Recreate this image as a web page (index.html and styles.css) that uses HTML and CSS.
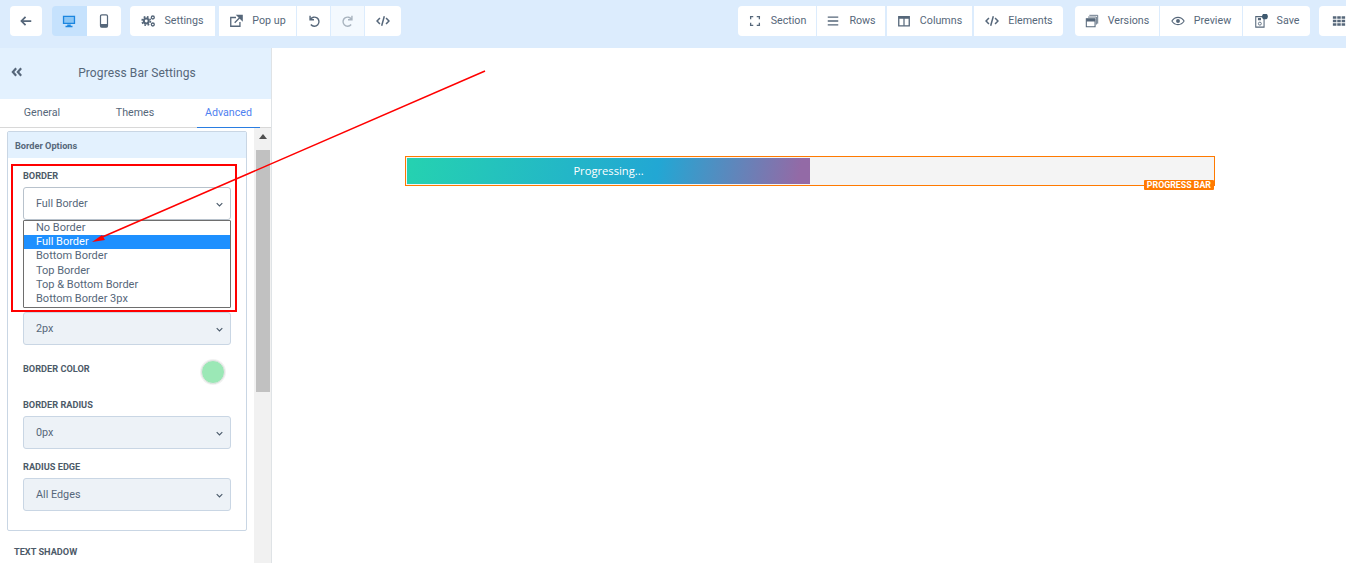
FILE: index.html
```html
<!DOCTYPE html>
<html lang="en">
<head>
  <meta charset="UTF-8">
  <title>Progress Bar Settings</title>
  <link rel="stylesheet" href="styles.css">
</head>
<body>
  <div class="app">
    <header class="topbar">
      <div class="group w-back">
        <a class="btn"><svg class="ico" viewBox="0 0 16 16"><path d="M14 8H3M7.500 3.200 2.800 8l4.700 4.800" fill="none" stroke="#56677a" stroke-width="2"/></svg></a>
      </div>
      <div class="group w-device">
        <a class="btn on"><svg class="ico" viewBox="0 0 16 16"><path d="M1 2h14v9.500H1z" fill="#1c86e0"/><path d="M2.500 3.500h11v6.500h-11z" fill="#8cc6f5"/><path d="M6 12h4v1.500h2V15H4v-1.500h2z" fill="#1c86e0"/></svg></a>
        <a class="btn"><svg class="ico" viewBox="0 0 16 16"><rect x="4" y="1" width="8" height="14" rx="1.500" fill="none" stroke="#56677a" stroke-width="1.400"/><path d="M4 11.500h8V15H4z" fill="#56677a"/></svg></a>
      </div>
      <div class="group w-left">
        <a class="btn settings"><svg class="ico wide" viewBox="0 0 16 16"><circle cx="6" cy="8" r="2.800" fill="none" stroke="#56677a" stroke-width="2.400"/><circle cx="6" cy="8" r="4.800" fill="none" stroke="#56677a" stroke-width="1.800" stroke-dasharray="2 1.800"/><circle cx="13.500" cy="4" r="1.700" fill="none" stroke="#56677a" stroke-width="1.500"/><circle cx="13.500" cy="12" r="1.700" fill="none" stroke="#56677a" stroke-width="1.500"/></svg>Settings</a>
        <a class="btn popup"><svg class="ico wide" viewBox="0 0 16 16"><path d="M12.500 9v5H2V4h6" fill="none" stroke="#56677a" stroke-width="1.500"/><path d="M6.500 10 13 3.500M9.500 1.500h5.500V7z" fill="#56677a" stroke="#56677a" stroke-width="1.500"/></svg>Pop up</a>
        <a class="btn undo"><svg class="ico" viewBox="0 0 16 16"><path d="M3.500 2v4.500H8M3.800 6.500a5.200 5.200 0 1 1 .6 5.500" fill="none" stroke="#56677a" stroke-width="1.600"/></svg></a>
        <a class="btn undo dim"><svg class="ico" viewBox="0 0 16 16"><path d="M12.500 2v4.500H8M12.200 6.500a5.200 5.200 0 1 0-.6 5.500" fill="none" stroke="#a9b4bf" stroke-width="1.600"/></svg></a>
        <a class="btn code"><svg class="ico" viewBox="0 0 16 16"><path d="M4.500 4.500 1.200 8l3.300 3.500M11.500 4.500 14.800 8l-3.300 3.500M9.500 2.500l-3 11" fill="none" stroke="#56677a" stroke-width="1.700"/></svg></a>
      </div>
      <div class="group w-section push">
        <a class="btn section"><svg class="ico wide" viewBox="0 0 16 16"><path d="M3 6V3h3M10 3h3v3M13 10v3h-3M6 13H3v-3" fill="none" stroke="#56677a" stroke-width="1.500"/></svg>Section</a>
        <a class="btn rows"><svg class="ico wide" viewBox="0 0 16 16"><path d="M2 3.500h12M2 8h12M2 12.500h12" stroke="#56677a" stroke-width="1.500"/></svg>Rows</a>
        <a class="btn columns"><svg class="ico wide" viewBox="0 0 16 16"><path d="M2 3h12v10.500H2z" fill="none" stroke="#56677a" stroke-width="1.500"/><path d="M2 3h12v2.500H2zM7.300 3h1.400v10.500H7.300z" fill="#56677a"/></svg>Columns</a>
        <a class="btn elements"><svg class="ico wide" viewBox="0 0 16 16"><path d="M4.500 4.500 1.200 8l3.300 3.500M11.500 4.500 14.800 8l-3.300 3.500M9.500 2.500l-3 11" fill="none" stroke="#56677a" stroke-width="1.700"/></svg>Elements</a>
      </div>
      <div class="group w-save">
        <a class="btn versions"><svg class="ico wide" viewBox="0 0 16 16"><path d="M5 1.500h9.500V11" fill="none" stroke="#56677a" stroke-width="1"/><path d="M3.500 3.500H13V12" fill="none" stroke="#56677a" stroke-width="1"/><path d="M1.500 5.500h10v9h-10z" fill="none" stroke="#56677a" stroke-width="1.200"/><path d="M1.500 5.500h10v3h-10z" fill="#56677a"/></svg>Versions</a>
        <a class="btn preview"><svg class="ico wide" viewBox="0 0 16 16"><path d="M1 8c3.500-5.500 10.500-5.500 14 0-3.500 5.500-10.500 5.500-14 0z" fill="none" stroke="#56677a" stroke-width="1.200"/><circle cx="8" cy="8" r="2.200" fill="#56677a"/></svg>Preview</a>
        <a class="btn save"><svg class="ico wide" viewBox="0 0 16 16"><path d="M2 3h9.500v12H2z" fill="none" stroke="#56677a" stroke-width="1.200"/><path d="M4.500 4.500h3.500v2.500H4.500z" fill="#56677a"/><circle cx="6.700" cy="11" r="1.700" fill="none" stroke="#56677a"/><circle cx="12.500" cy="2.800" r="3.300" fill="#3f5a70"/></svg>Save</a>
      </div>
      <div class="group w-grid">
        <a class="btn"><svg class="ico" viewBox="0 0 16 16"><path d="M1 2.500h4v3H1zM6 2.500h4v3H6zM11 2.500h4v3h-4zM1 6.500h4v3H1zM6 6.500h4v3H6zM11 6.500h4v3h-4zM1 10.500h4v3H1zM6 10.500h4v3H6zM11 10.500h4v3h-4z" fill="#56677a"/></svg></a>
      </div>
    </header>

    <div class="main">
      <aside class="side">
        <div class="side-head">
          <svg class="collapse" viewBox="0 0 14 12"><path d="M6 1.500 2 6l4 4.500M12 1.500 8 6l4 4.500" fill="none" stroke="#56677a" stroke-width="2.600"/></svg>
          <h1>Progress Bar Settings</h1>
        </div>
        <ul class="tabs">
          <li>General</li>
          <li>Themes</li>
          <li class="on">Advanced</li>
        </ul>
        <div class="side-body">
          <div class="side-scroll">
            <section class="card">
              <h2>Border Options</h2>
              <div class="card-body">
                <label class="first">BORDER</label>
                <div class="field white">
                  Full Border
                  <svg class="chev" viewBox="0 0 10 6"><path d="M1 1l4 4 4-4" fill="none" stroke="#4a5a6a" stroke-width="1.600"/></svg>
                  <ul class="options">
                    <li>No Border</li>
                    <li class="on">Full Border</li>
                    <li>Bottom Border</li>
                    <li>Top Border</li>
                    <li>Top &amp; Bottom Border</li>
                    <li>Bottom Border 3px</li>
                  </ul>
                </div>
                <div class="field under-list">
                  2px
                  <svg class="chev" viewBox="0 0 10 6"><path d="M1 1l4 4 4-4" fill="none" stroke="#4a5a6a" stroke-width="1.600"/></svg>
                </div>
                <div class="color-row">
                  <label>BORDER COLOR</label>
                  <span class="swatch"></span>
                </div>
                <label class="after-color">BORDER RADIUS</label>
                <div class="field">
                  0px
                  <svg class="chev" viewBox="0 0 10 6"><path d="M1 1l4 4 4-4" fill="none" stroke="#4a5a6a" stroke-width="1.600"/></svg>
                </div>
                <label>RADIUS EDGE</label>
                <div class="field">
                  All Edges
                  <svg class="chev" viewBox="0 0 10 6"><path d="M1 1l4 4 4-4" fill="none" stroke="#4a5a6a" stroke-width="1.600"/></svg>
                </div>
              </div>
            </section>
            <h3 class="shadow-title">TEXT SHADOW</h3>
          </div>
          <div class="scrollbar">
            <svg class="up" viewBox="0 0 8 5"><path d="M4 0l4 5H0z" fill="#505050"/></svg>
            <div class="thumb"></div>
          </div>
        </div>
      </aside>

      <main class="canvas">
        <div class="progress">
          <div class="progress-fill">Progressing...</div>
          <span class="tag">PROGRESS BAR</span>
        </div>
      </main>
    </div>

    <div class="redbox"></div>
    <svg class="pointer" viewBox="0 0 1346 563">
      <path d="M485 71 100 238" stroke="#f00" stroke-width="1.500" fill="none"/>
      <path d="M92 242 102 235 105 240z" fill="#f00"/>
    </svg>
  </div>
</body>
</html>
```

FILE: styles.css
```css
*{margin:0;padding:0;box-sizing:border-box;}
li{list-style:none;}
html,body{height:100%;overflow:hidden;background:#fff;font-family:"Roboto",sans-serif;font-size:10.700px;color:#56677a;}
.app{position:relative;width:100%;height:563px;overflow:hidden;}

/* top bar */
.topbar{display:flex;align-items:flex-start;height:48px;padding:6px 0 0 10px;background:#dcecfd;white-space:nowrap;}
.group{display:flex;height:30px;flex:none;margin-right:9px;border-radius:4px;overflow:hidden;}
.group.push{margin-left:auto;margin-right:12px;}
.w-back{width:32px;margin-right:10px;}
.w-device{width:69px;}
.w-left{width:271px;margin-right:0;gap:1px;background:#dcecfd;}
.w-section{width:325px;gap:1px;background:#dcecfd;}
.w-save{width:235px;gap:1px;background:#dcecfd;}
.w-grid{width:40px;margin-right:-13px;border-radius:4px 0 0 4px;}
.btn{display:flex;align-items:center;justify-content:center;flex:1 1 auto;padding-bottom:1px;background:#fff;cursor:pointer;}
.btn.on{background:#c6e2fd;}
.btn.dim{background:#f4f9fe;}
.ico{display:block;width:14px;height:14px;flex:none;}
.ico.wide{margin-right:9px;}
.settings{flex:0 0 85px;margin-right:3px;}
.popup{flex:0 0 77px;}
.undo{flex:0 0 33px;}
.code{flex:0 0 36px;}
.section{flex:0 0 78px;}
.rows{flex:0 0 68px;}
.columns{flex:0 0 85px;margin-left:1px;}
.elements{flex:0 0 90px;margin-left:1px;}
.versions{flex:0 0 84px;}
.preview{flex:0 0 82px;}
.save{flex:0 0 67px;}

/* layout */
.main{display:flex;height:515px;}
.side{display:flex;flex-direction:column;flex:none;width:272px;border-right:1px solid #dfe3e6;}
.side-head{position:relative;display:flex;align-items:center;justify-content:center;height:51px;padding:0 0 2px 3px;background:#e3f1fe;}
.side-head h1{font-size:12px;font-weight:400;letter-spacing:.1px;}
.collapse{position:absolute;left:10px;top:19px;width:14px;height:10px;}
.tabs{display:flex;height:29px;flex:none;border-bottom:1px solid #d8d8d8;}
.tabs li{width:84px;line-height:27px;text-align:center;font-size:10.700px;}
.tabs li:nth-child(2){width:102px;}
.tabs li.on{width:63px;height:29px;margin-left:11px;color:#4f7ff0;border-bottom:1px solid #2a7de1;}

/* settings column */
.side-body{display:flex;flex:1;min-height:0;}
.side-scroll{flex:1;min-width:0;padding:3px 7px 0;overflow:hidden;}
.scrollbar{position:relative;flex:none;width:17px;background:#f1f1f1;padding-top:22px;}
.up{position:absolute;left:5px;top:6px;width:8px;height:5px;}
.thumb{width:14px;height:242px;margin-left:2px;background:#c1c1c1;}
.card{height:400px;border:1px solid #c9d6e4;border-radius:2px;}
.card h2{height:26px;padding-left:7px;background:#e3f1fe;font-size:9.200px;font-weight:700;line-height:27px;}
.card-body{padding:0 15px;}
label{display:block;height:12px;margin:12px 0 5px;font-size:9.200px;font-weight:700;line-height:12px;color:#4d5a68;}
label.first{margin-top:12px;margin-bottom:5px;}
.field{position:relative;height:33px;padding-left:12px;line-height:32px;font-size:10.800px;background:#edf2f7;border:1px solid #c9d6e4;border-radius:3px;}
.field.white{background:#fff;border-color:#b8c2cc;}
.field.under-list{margin-top:92px;}
.chev{position:absolute;right:7px;top:14px;width:7px;height:5px;}
.options{position:absolute;left:-1px;right:-1px;top:32px;z-index:2;height:88px;background:#fff;border:1px solid #6e6e6e;border-radius:1px;}
.options li{height:14.200px;padding-left:12px;font-size:11px;line-height:14px;}
.options li.on{background:#1e90ff;color:#fff;}
.color-row{display:flex;justify-content:space-between;height:25px;margin-top:15px;}
.color-row label{margin:3px 0 0;}
.swatch{width:24px;height:24px;margin-right:6px;border-radius:50%;background:#9be8b6;border:1px solid #e4e4e4;box-shadow:0 0 0 1px #f2f2f2;}
label.after-color{margin-top:14px;margin-bottom:5px;}
.shadow-title{margin:15px 0 0 7px;font-size:9.200px;font-weight:700;line-height:12px;color:#4d5a68;}

/* canvas */
.canvas{flex:1;min-width:0;padding:108px 131px 0 133px;background:#fff;}
.progress{position:relative;height:30px;padding:1px;background:#f4f4f4;border:1px solid #ff7a00;}
.progress-fill{width:403px;height:26px;background:linear-gradient(100deg,#25d2b0 0%,#22a7d4 62%,#936aa6 97%);color:#fff;font-family:"Open Sans",sans-serif;font-size:11.200px;line-height:26px;text-align:center;}
.tag{position:absolute;right:0;bottom:-5px;height:10px;padding:0 3px;background:#ff7a00;border-radius:1px;color:#fff;font-size:8.800px;font-weight:700;line-height:10px;}

/* annotation over the screenshot */
.redbox{position:absolute;left:11px;top:164px;width:226px;height:148px;border:2px solid #f00;z-index:3;pointer-events:none;}
.pointer{position:absolute;left:0;top:0;width:1346px;height:563px;z-index:4;pointer-events:none;}
```
